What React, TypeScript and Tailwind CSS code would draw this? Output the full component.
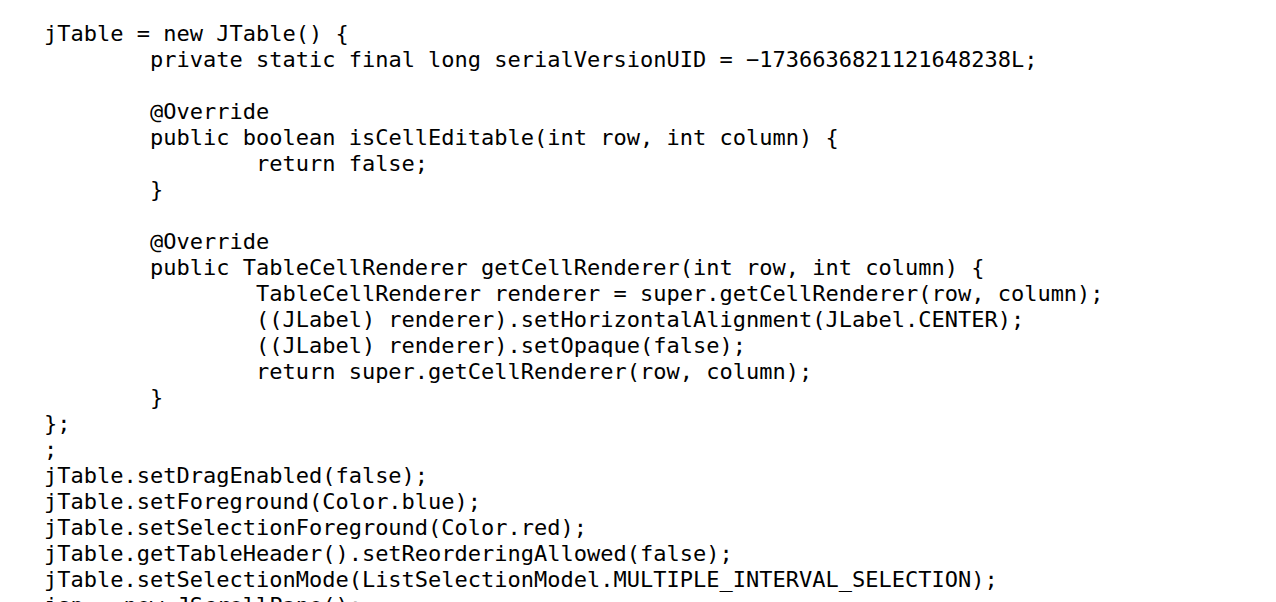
const lines = [
  'jTable = new JTable() {',
  '\tprivate static final long serialVersionUID = \u22121736636821121648238L;',
  '',
  '\t@Override',
  '\tpublic boolean isCellEditable(int row, int column) {',
  '\t\treturn false;',
  '\t}',
  '',
  '\t@Override',
  '\tpublic TableCellRenderer getCellRenderer(int row, int column) {',
  '\t\tTableCellRenderer renderer = super.getCellRenderer(row, column);',
  '\t\t((JLabel) renderer).setHorizontalAlignment(JLabel.CENTER);',
  '\t\t((JLabel) renderer).setOpaque(false);',
  '\t\treturn super.getCellRenderer(row, column);',
  '\t}',
  '};',
  ';',
  'jTable.setDragEnabled(false);',
  'jTable.setForeground(Color.blue);',
  'jTable.setSelectionForeground(Color.red);',
  'jTable.getTableHeader().setReorderingAllowed(false);',
  'jTable.setSelectionMode(ListSelectionModel.MULTIPLE_INTERVAL_SELECTION);',
  'jsp = new JScrollPane();',
]

export default function App() {
  return (
    <div className="h-[602px] w-[1276px] overflow-hidden bg-white">
      <pre
        className="m-0 pl-[44px] pt-[21px] text-[22px] leading-[26px] text-black [tab-size:8]"
        style={{ fontFamily: '"DejaVu Sans Mono", "Liberation Mono", monospace' }}
      >
        {lines.map((l, i) => (
          <div key={i} className="h-[26px] whitespace-pre">
            {l}
          </div>
        ))}
      </pre>
    </div>
  )
}
